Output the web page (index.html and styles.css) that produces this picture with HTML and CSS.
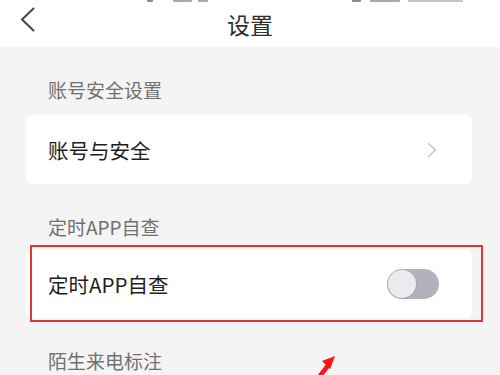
FILE: index.html
```html
<!DOCTYPE html>
<html lang="zh-CN">
<head>
<meta charset="utf-8">
<title>设置</title>
<link rel="stylesheet" href="styles.css">
</head>
<body>
<div class="page">
  <header class="header">
    <div class="status">
      <span class="st st-a"></span>
      <span class="st st-b"></span>
      <span class="st st-c"></span>
      <span class="st-spacer"></span>
      <span class="st st-d"></span>
      <span class="st st-e"></span>
      <span class="st st-f"></span>
    </div>
    <div class="nav">
      <svg class="back" width="16" height="26" viewBox="0 0 16 26">
        <polyline points="13.5,1.5 2,12.5 13.5,23.5" fill="none" stroke="#454545" stroke-width="2" stroke-linecap="round" stroke-linejoin="round"/>
      </svg>
      <h1 class="title">设置</h1>
    </div>
  </header>

  <div class="section-title first">账号安全设置</div>
  <div class="card">
    <span class="item-text">账号与安全</span>
    <svg class="chev" width="10" height="16" viewBox="0 0 10 16">
      <polyline points="1.5,1.5 8.5,8 1.5,14.5" fill="none" stroke="#c4c4c4" stroke-width="1.5" stroke-linecap="round" stroke-linejoin="round"/>
    </svg>
  </div>

  <div class="section-title">定时APP自查</div>
  <div class="card highlighted">
    <span class="item-text">定时APP自查</span>
    <span class="toggle"><span class="knob"></span></span>
    <span class="red-box"></span>
  </div>

  <div class="section-title">陌生来电标注</div>

  <svg class="arrow" width="40" height="40" viewBox="0 0 40 40">
    <line x1="10" y1="40" x2="24" y2="22" stroke="#ff1414" stroke-width="4.5"/>
    <polygon points="29,15 16,20 24,28" fill="#ff1414"/>
  </svg>
</div>
</body>
</html>
```

FILE: styles.css
```css
* {
  box-sizing: border-box;
}

html, body {
  margin: 0;
  padding: 0;
}

body {
  background: #f4f4f4;
  font-family: "Noto Sans CJK SC", "Noto Sans", sans-serif;
  width: 500px;
  height: 375px;
  overflow: hidden;
}

.page {
  position: relative;
  width: 500px;
  height: 375px;
  overflow: hidden;
}

.header {
  background: #ffffff;
  height: 47px;
}

.status {
  display: flex;
  height: 4px;
  align-items: flex-start;
}

.st {
  display: block;
  height: 2px;
  background: #8c8c8c;
  border-radius: 0 0 1px 1px;
}

.st-a { margin-left: 147px; width: 6px; }
.st-b { margin-left: 20px; width: 19px; background: #a8a8a8; }
.st-c { margin-left: 6px; width: 10px; background: #a8a8a8; }
.st-spacer { flex: 1; }
.st-d { width: 9px; margin-right: 9px; }
.st-e { width: 30px; margin-right: 8px; background: #a8a8a8; }
.st-f { width: 55px; margin-right: 37px; background: #c4c4c4; }

.nav {
  position: relative;
  height: 43px;
  display: flex;
  align-items: center;
  justify-content: center;
}

.back {
  position: absolute;
  left: 20px;
  top: 3px;
}

.title {
  margin: 0;
  font-size: 23px;
  font-weight: 400;
  color: #2e2e2e;
  line-height: 30px;
  margin-top: -4px;
}

.section-title {
  padding: 33px 0 13px 48px;
  font-size: 19px;
  line-height: 20px;
  color: #707070;
}

.section-title.first {
  padding-top: 33px;
  padding-bottom: 15px;
}

.card {
  position: relative;
  margin: 0 28px 0 26px;
  height: 69px;
  background: #ffffff;
  border-radius: 6px;
  display: flex;
  align-items: center;
  justify-content: space-between;
  padding: 0 35px 0 22px;
}

.card.highlighted {
  height: 68px;
  padding-right: 33px;
}

.item-text {
  font-size: 20.5px;
  color: #1e1e1e;
  line-height: 24px;
}

.chev {
  display: block;
}

.toggle {
  position: relative;
  display: block;
  width: 52px;
  height: 30px;
  border-radius: 15px;
  background: #b2b2bd;
}

.knob {
  position: absolute;
  left: 1px;
  top: 1px;
  width: 28px;
  height: 28px;
  border-radius: 50%;
  background: #ebebee;
  box-shadow: 0 1px 2px rgba(0, 0, 0, 0.15);
}

.red-box {
  position: absolute;
  left: 4px;
  top: -5px;
  right: -11px;
  bottom: -4px;
  border: 2.5px solid #e23636;
  pointer-events: none;
}

.arrow {
  position: absolute;
  left: 306px;
  top: 341px;
}
```
